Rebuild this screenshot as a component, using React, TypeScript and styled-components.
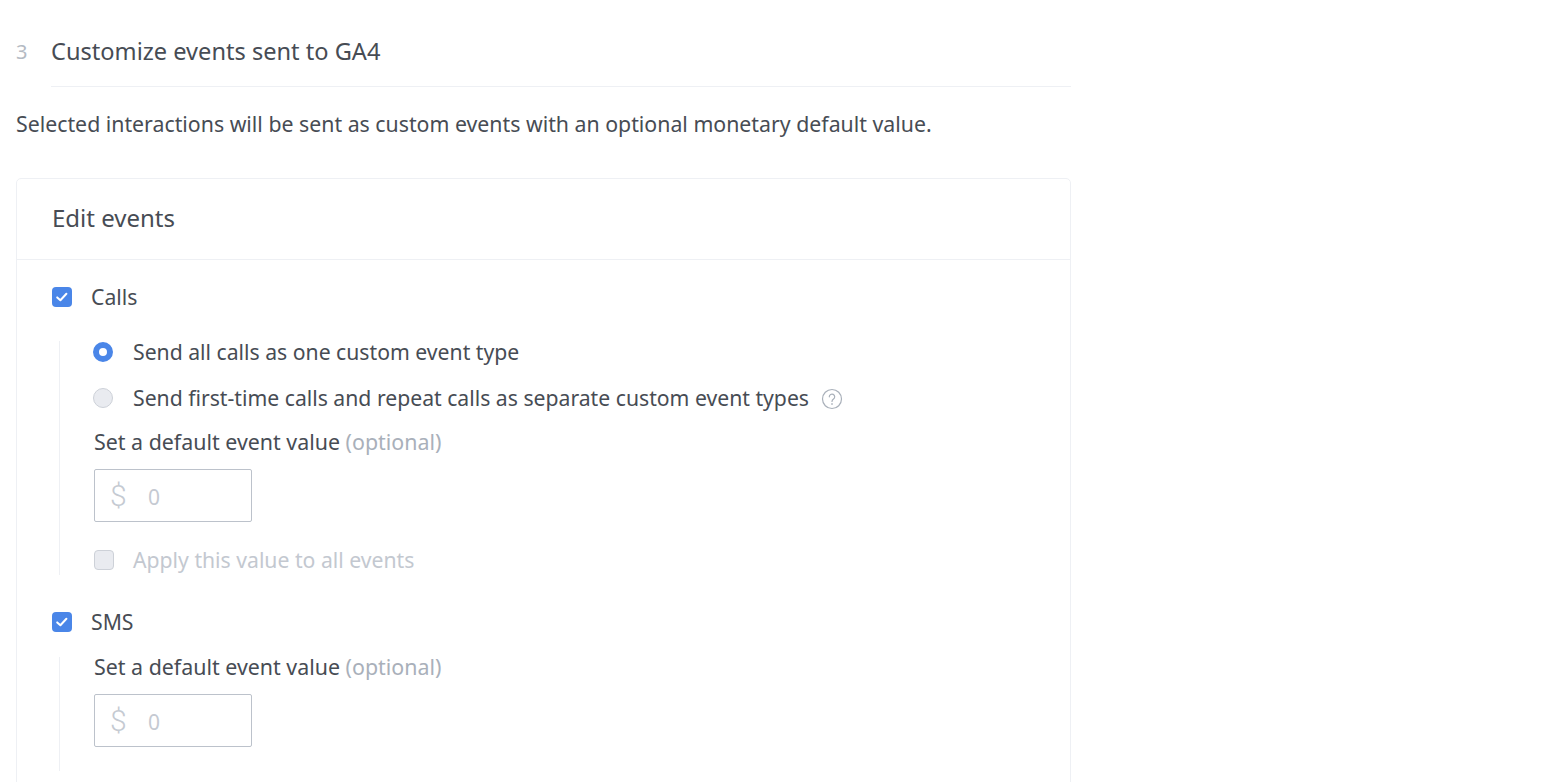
import styled, { createGlobalStyle } from "styled-components";

const GlobalStyle = createGlobalStyle`
  html, body {
    margin: 0;
    background: #fff;
    overflow: hidden;
  }
  body {
    font-family: "Noto Sans", "Open Sans", sans-serif;
    color: #474c54;
  }
`;

const Page = styled.div`
  width: 1055px;
  height: 782px;
  margin-left: 16px;
  overflow: hidden;
`;

const StepHeader = styled.div`
  display: flex;
  height: 87px;
`;

const StepNumber = styled.div`
  width: 35px;
  padding-top: 38px;
  font-size: 20px;
  line-height: 28px;
  color: #b4bac3;
`;

const StepTitle = styled.h2`
  flex: 1;
  margin: 0;
  padding-top: 36px;
  font-size: 23.6px;
  line-height: 30px;
  font-weight: 400;
  border-bottom: 1px solid #eef0f4;
`;

const Intro = styled.p`
  margin: 0;
  padding-top: 22px;
  padding-bottom: 1px;
  font-size: 21.3px;
  line-height: 30px;
`;

const Card = styled.section`
  margin-top: 38px;
  min-height: 700px;
  border: 1px solid #eef0f4;
  border-radius: 5px;
`;

const CardHeader = styled.h3`
  margin: 0;
  height: 81px;
  box-sizing: border-box;
  padding: 24px 35px 0;
  font-size: 24px;
  line-height: 30px;
  font-weight: 400;
  border-bottom: 1px solid #eef0f4;
`;

const CardBody = styled.div`
  padding: 21px 35px 0;
`;

const OptionRow = styled.label<{ $muted?: boolean }>`
  display: flex;
  align-items: center;
  gap: 19px;
  height: 30px;
  font-size: 21.2px;
  color: ${(p) => (p.$muted ? "#c3c8d0" : "#474c54")};
`;

const CheckBox = styled.span<{ $checked?: boolean }>`
  display: flex;
  align-items: center;
  justify-content: center;
  width: 20px;
  height: 20px;
  margin-top: 2px;
  box-sizing: border-box;
  border-radius: 4px;
  background: ${(p) => (p.$checked ? "#4a86e8" : "#e9ebf0")};
  border: ${(p) => (p.$checked ? "none" : "1px solid #cdd1d8")};
`;

const Radio = styled.span<{ $checked?: boolean }>`
  width: 20px;
  height: 20px;
  margin: 2px 0 0 -1px;
  box-sizing: border-box;
  border-radius: 50%;
  background: ${(p) => (p.$checked ? "#fff" : "#e9ebf0")};
  border: ${(p) => (p.$checked ? "6px solid #4a86e8" : "1px solid #cdd1d8")};
`;

const Nested = styled.div<{ $top: number; $height: number }>`
  height: ${(p) => p.$height}px;
  margin: ${(p) => p.$top}px 0 31px 7px;
  padding-left: 34px;
  border-left: 1px solid #eef0f4;
`;

const RadioStack = styled.div`
  display: flex;
  flex-direction: column;
  gap: 26px;
  margin: -1px 0 25px;
`;

const RadioRow = styled(OptionRow)`
  height: 20px;
  gap: 20px;
`;

const HelpIcon = styled.svg`
  margin: 4px 0 0 -8px;
  flex: none;
`;

const FieldLabel = styled.div`
  height: 20px;
  font-size: 21.4px;
  line-height: 20px;
`;

const Optional = styled.span`
  color: #a9b0ba;
`;

const MoneyInput = styled.div`
  display: flex;
  align-items: center;
  width: 158px;
  height: 53px;
  margin-top: 17px;
  box-sizing: border-box;
  padding-left: 15px;
  border: 1px solid #bcc2cb;
  border-radius: 2px;
  color: #c5cad2;
`;

const Currency = styled.span`
  width: 38px;
  font-family: "Roboto", sans-serif;
  font-size: 30px;
  font-weight: 300;
`;

const Amount = styled.span`
  margin-top: 2px;
  font-size: 21px;
`;

const ApplyRow = styled(OptionRow)`
  margin-top: 22px;
`;

const Tick = () => (
  <svg width="16" height="16" viewBox="0 0 16 16" fill="none">
    <path d="M3.2 8.4 L6.4 11.2 L12.4 4.8" stroke="#fff" strokeWidth="2" strokeLinecap="round" strokeLinejoin="round" />
  </svg>
);

const DefaultValue = () => (
  <>
    <FieldLabel>
      Set a default event value <Optional>(optional)</Optional>
    </FieldLabel>
    <MoneyInput>
      <Currency>$</Currency>
      <Amount>0</Amount>
    </MoneyInput>
  </>
);

const App = () => (
  <Page>
    <GlobalStyle />
    <StepHeader>
      <StepNumber>3</StepNumber>
      <StepTitle>Customize events sent to GA4</StepTitle>
    </StepHeader>
    <Intro>Selected interactions will be sent as custom events with an optional monetary default value.</Intro>
    <Card>
      <CardHeader>Edit events</CardHeader>
      <CardBody>
        <OptionRow>
          <CheckBox $checked><Tick /></CheckBox>
          Calls
        </OptionRow>
        <Nested $top={31} $height={234}>
          <RadioStack>
            <RadioRow>
              <Radio $checked />
              Send all calls as one custom event type
            </RadioRow>
            <RadioRow>
              <Radio />
              Send first-time calls and repeat calls as separate custom event types
              <HelpIcon width="22" height="22" viewBox="0 0 22 22" fill="none" stroke="#a9b0ba">
                <circle cx="11" cy="11" r="9.5" strokeWidth="1.2" />
                <path d="M8.3 8.8a2.7 2.7 0 1 1 4.2 2.2c-1 .7-1.5 1.2-1.5 2.4" strokeWidth="1.2" strokeLinecap="round" />
                <circle cx="11" cy="16" r=".5" />
              </HelpIcon>
            </RadioRow>
          </RadioStack>
          <DefaultValue />
          <ApplyRow $muted>
            <CheckBox />
            Apply this value to all events
          </ApplyRow>
        </Nested>
        <OptionRow>
          <CheckBox $checked><Tick /></CheckBox>
          SMS
        </OptionRow>
        <Nested $top={21} $height={114}>
          <DefaultValue />
        </Nested>
      </CardBody>
    </Card>
  </Page>
);

export default App;
